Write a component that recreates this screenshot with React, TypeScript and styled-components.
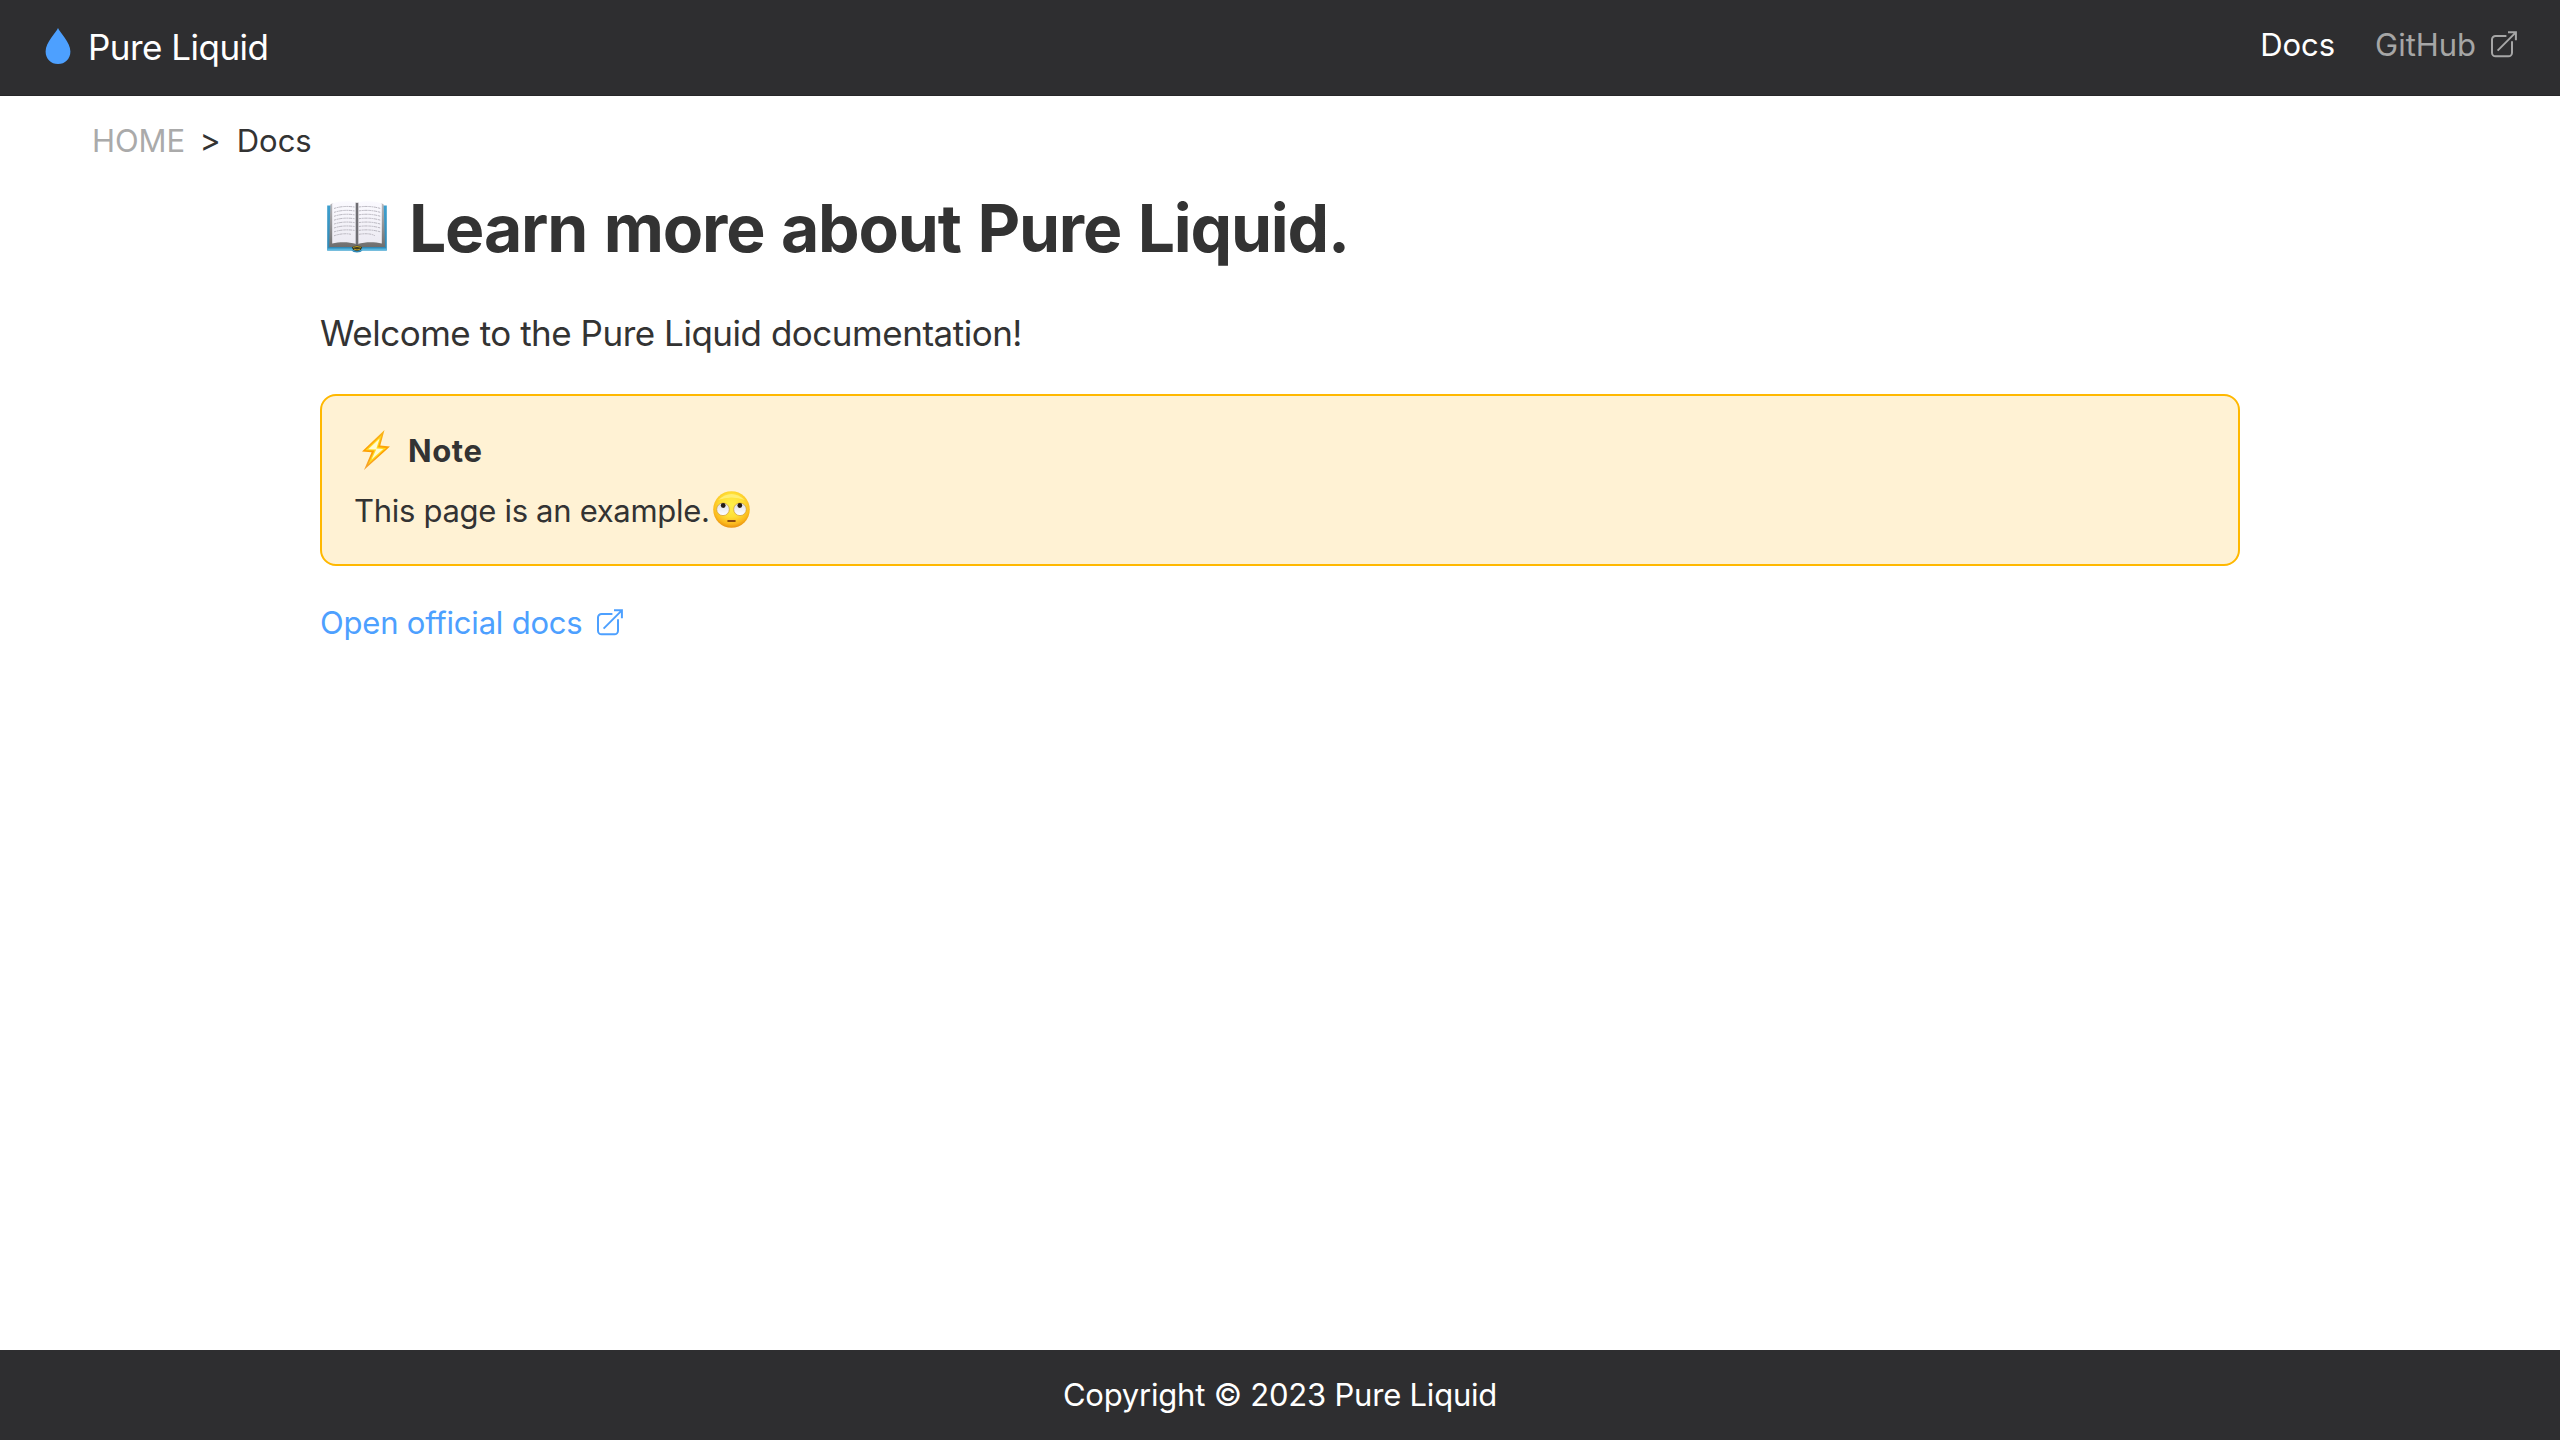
import React from "react";
import styled, { createGlobalStyle } from "styled-components";

const GlobalStyle = createGlobalStyle`
  *, *::before, *::after { box-sizing: border-box; }
  body {
    margin: 0;
    background: #fff;
    color: #333;
    font-family: Inter, "Noto Sans", sans-serif;
    font-size: 31px;
  }
  svg { flex: none; }
`;

const Page = styled.div`
  display: flex;
  flex-direction: column;
  min-height: 100vh;
`;

const Header = styled.header`
  display: flex;
  justify-content: space-between;
  height: 96px;
  padding: 0 42px 0 45px;
  background: #2e2e30;
  border-bottom: 1px solid #262628;
`;

const Brand = styled.a`
  display: flex;
  align-items: center;
  gap: 17px;
  color: #fff;
  font-size: 35px;
  line-height: 48px;
  letter-spacing: -0.52px;
  padding-bottom: 2px;

  svg { margin-bottom: 1px; }
`;

const Nav = styled.nav`
  display: flex;
  align-items: center;
  gap: 40px;
  padding-bottom: 6px;
`;

const NavLink = styled.a<{ $active?: boolean }>`
  display: flex;
  align-items: center;
  gap: 15px;
  line-height: 40px;
  letter-spacing: -0.04px;
  color: ${(p) => (p.$active ? "#fff" : "#a6a6a6")};
`;

const Breadcrumb = styled.nav`
  display: flex;
  padding: 21px 92px 0;
  line-height: 48px;
`;

const Crumb = styled.a`
  letter-spacing: -0.07px;
  color: #aaa;
`;

const Separator = styled.span`
  padding: 0 16px 0 14.5px;
  font-size: 32px;
`;

const Current = styled.span`
  letter-spacing: -0.05px;
`;

const Main = styled.main`
  flex: 1;
  width: 1920px;
  margin: 0 auto;
`;

const Title = styled.h1`
  display: flex;
  align-items: center;
  gap: 22px;
  margin: 23px 0 0;
  padding-left: 7px;
  font-size: 66px;
  font-weight: 700;
  line-height: 80px;
  letter-spacing: -1.2px;
  word-spacing: 2.3px;

  svg { margin-bottom: 2px; }
`;

const Lead = styled.p`
  margin: 41px 0 0;
  font-size: 35px;
  line-height: 48px;
  letter-spacing: -0.48px;
`;

const Note = styled.section`
  height: 172px;
  margin-top: 37px;
  padding: 35px 32px 0;
  border: 2px solid #ffb800;
  border-radius: 16px;
  background: #fff2d4;
`;

const NoteTitle = styled.div`
  display: flex;
  align-items: center;
  gap: 18px;
  padding-left: 8px;
  font-weight: 700;
  line-height: 40px;
  letter-spacing: 0.6px;

  svg { margin: -2px 0 0; }
`;

const NoteText = styled.p`
  display: flex;
  align-items: center;
  gap: 3px;
  margin: 20px 0 0;
  line-height: 40px;
  letter-spacing: -0.3px;

  svg { margin-bottom: 3px; }
`;

const DocsLink = styled.a`
  display: inline-flex;
  align-items: center;
  gap: 14px;
  margin-top: 37px;
  line-height: 40px;
  letter-spacing: -0.2px;
  color: #4da0ff;

  svg { margin-bottom: 2px; }
`;

const Footer = styled.footer`
  height: 90px;
  background: #2e2e30;
  color: #fff;
  text-align: center;
  line-height: 90px;
  letter-spacing: -0.21px;
`;

const Drop = () => (
  <svg width="26" height="36" viewBox="0 0 26 36">
    <path d="M13 0C14.8 4.6 25.4 14.3 25.4 23.4C25.4 30.8 20 36 13 36S.6 30.8.6 23.4C.6 14.3 11.2 4.6 13 0Z" fill="#4da0ff" />
  </svg>
);

const External = () => (
  <svg width="27" height="27" viewBox="0 0 27 27" fill="none" stroke="currentColor" strokeWidth="2">
    <path d="M15.4 4.9H4.6A3.6 3.6 0 0 0 1 8.5V21.7A3.6 3.6 0 0 0 4.6 25.3H17.4A3.6 3.6 0 0 0 21 21.7V10.2" />
    <path d="M6.6 19.6L24.6 1.6M17 1.2H24.9V9.3" />
  </svg>
);

const pageLines = [0, 1, 2, 3, 4, 5, 6, 7];

const Book = () => (
  <svg width="60" height="52" viewBox="0 0 60 52">
    <defs>
      <linearGradient id="cover" x1="0" y1="0" x2="0" y2="1">
        <stop offset="0" stopColor="#3d9fce" />
        <stop offset="1" stopColor="#2f86b4" />
      </linearGradient>
      <linearGradient id="leaf" x1="0" y1="0" x2="0" y2="1">
        <stop offset="0" stopColor="#fbfaff" />
        <stop offset="1" stopColor="#eceaf2" />
      </linearGradient>
      <linearGradient id="edge" x1="0" y1="0" x2="0" y2="1">
        <stop offset="0" stopColor="#b9b8bd" />
        <stop offset="1" stopColor="#6b6a69" />
      </linearGradient>
    </defs>
    <path d="M.2 4.500H59.800V49.400H35.500Q34 51.400 30 51.400T24.500 49.400H.2Z" fill="url(#cover)" />
    <path d="M.2 47.600H59.800V49.400H.2Z" fill="#57b7e0" />
    <path d="M3.300 3.500L5 2.500H55L56.700 3.500L58 46H33L30 48L27 46H2.200Z" fill="url(#edge)" />
    <path d="M5.200 2.500C12 0 22-.5 29.200 1.400L29.400 43C21 40.500 12 41 5.200 42.400Z" fill="url(#leaf)" />
    <path d="M54.800 2.500C48 0 38-.5 30.800 1.400L30.600 43C39 40.500 48 41 54.800 42.400Z" fill="url(#leaf)" />
    <path d="M28.600 1.400Q30 2 31.400 1.400V44L30 46L28.600 44Z" fill="#8c8b90" />
    <path d="M29.500 2H30.500V45H29.500Z" fill="#535257" />
    <path d="M24.800 46.200Q30 42.800 35.200 46.200L34 48.800Q30 51 26 48.800Z" fill="#3b3a20" />
    <path d="M26 46.300Q30 44.600 34 46.300M27 48.200Q30 49.600 33 48.200" stroke="#b99a24" strokeWidth="1" fill="none" />
    {pageLines.map((i) => (
      <g key={i} fill="none" stroke="#b3b1ba" strokeWidth=".9" strokeDasharray="2.600 .6 1.700 .5 3.400 .7">
        <path d={`M7 ${7.5 + i * 3.9}Q16 ${4.4 + i * 3.9} ${i === 7 ? 24 : 27.5} ${6 + i * 3.9}`} />
        <path d={`M31.800 ${6 + i * 3.9}Q43 ${4.4 + i * 3.9} ${i === 7 ? 48 : 53.5} ${7.5 + i * 3.9}`} />
      </g>
    ))}
  </svg>
);

const Bolt = () => (
  <svg width="28" height="40" viewBox="0 0 28 40">
    <defs>
      <linearGradient id="bolt" x1="0" y1="0" x2="0" y2="1">
        <stop offset="0" stopColor="#f9b51c" />
        <stop offset=".55" stopColor="#ff9d00" />
        <stop offset="1" stopColor="#f5a536" />
      </linearGradient>
    </defs>
    <path d="M22.500 0L18.300 15.600L28 16.600L2 40L9.600 22.200L0 21.500Z" fill="url(#bolt)" />
    <path d="M19.800 5L16 17.300L24.200 17.900L6 34.500L12.400 20.600L3.400 20.300Z" fill="#ffd81f" />
    <path d="M17.600 8.600L14.400 18.400L21.300 19L9.500 29.600L14.200 19.400L6.300 19.300Z" fill="#fffbd2" />
  </svg>
);

const RollingEyes = () => (
  <svg width="37" height="37" viewBox="0 0 37 37">
    <defs>
      <radialGradient id="face" cx=".5" cy=".38" r=".64">
        <stop offset="0" stopColor="#fff04a" />
        <stop offset=".5" stopColor="#ffdf35" />
        <stop offset=".8" stopColor="#fbb91e" />
        <stop offset="1" stopColor="#e58a0c" />
      </radialGradient>
      <linearGradient id="eye" x1="0" y1="0" x2="0" y2="1">
        <stop offset="0" stopColor="#dedfe6" />
        <stop offset="1" stopColor="#fff" />
      </linearGradient>
    </defs>
    <circle cx="18.500" cy="18.500" r="18.300" fill="url(#face)" />
    <path d="M5 9Q18.500-3 32 9Q18.500 4 5 9Z" fill="#fff79a" opacity=".6" />
    <circle cx="10" cy="18.300" r="6.300" fill="url(#eye)" stroke="#c98b1c" strokeWidth=".6" />
    <circle cx="27" cy="18.300" r="6.300" fill="url(#eye)" stroke="#c98b1c" strokeWidth=".6" />
    <circle cx="10.200" cy="14.500" r="2.400" fill="#241a14" />
    <circle cx="26.800" cy="14.500" r="2.400" fill="#241a14" />
    <path d="M15.200 30H21.800" stroke="#8a4a10" strokeWidth="2" strokeLinecap="round" />
  </svg>
);

export default function App() {
  return (
    <Page>
      <GlobalStyle />
      <Header>
        <Brand>
          <Drop />
          Pure Liquid
        </Brand>
        <Nav>
          <NavLink $active>Docs</NavLink>
          <NavLink>
            GitHub
            <External />
          </NavLink>
        </Nav>
      </Header>
      <Breadcrumb>
        <Crumb>HOME</Crumb>
        <Separator>&gt;</Separator>
        <Current>Docs</Current>
      </Breadcrumb>
      <Main>
        <Title>
          <Book />
          <span>Learn more about Pure Liquid.</span>
        </Title>
        <Lead>Welcome to the Pure Liquid documentation!</Lead>
        <Note>
          <NoteTitle>
            <Bolt />
            Note
          </NoteTitle>
          <NoteText>
            This page is an example.
            <RollingEyes />
          </NoteText>
        </Note>
        <DocsLink>
          Open official docs
          <External />
        </DocsLink>
      </Main>
      <Footer>Copyright © 2023 Pure Liquid</Footer>
    </Page>
  );
}
